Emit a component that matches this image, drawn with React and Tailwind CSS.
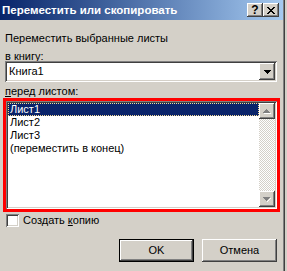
const raised =
  "shadow-[inset_-1px_-1px_0_#404040,inset_1px_1px_0_#ffffff,inset_-2px_-2px_0_#808080,inset_2px_2px_0_#d4d0c8]";
const sunken =
  "shadow-[inset_1px_1px_0_#808080,inset_-1px_-1px_0_#ffffff,inset_2px_2px_0_#404040,inset_-2px_-2px_0_#d4d0c8]";

function ArrowDown({ color = "#000000" }) {
  return (
    <svg width="7" height="4" viewBox="0 0 7 4" className="block" shapeRendering="crispEdges">
      <path d="M0 0h7v1H0zM1 1h5v1H1zM2 2h3v1H2zM3 3h1v1H3z" fill={color} />
    </svg>
  );
}

function ArrowUp({ color = "#808080" }) {
  return (
    <svg width="8" height="5" viewBox="0 0 8 5" className="block" shapeRendering="crispEdges">
      <path d="M4 1h1v1H4zM5 2h1v1H5zM6 3h1v1H6zM1 4h7v1H1z" fill="#ffffff" />
      <path d="M3 0h1v1H3zM2 1h3v1H2zM1 2h5v1H1zM0 3h7v1H0z" fill={color} />
    </svg>
  );
}

function ArrowDownDisabled() {
  return (
    <svg width="8" height="5" viewBox="0 0 8 5" className="block" shapeRendering="crispEdges">
      <path d="M7 1h1v1H7zM6 2h1v1H6zM5 3h1v1H5zM4 4h1v1H4z" fill="#ffffff" />
      <path d="M0 0h7v1H0zM1 1h5v1H1zM2 2h3v1H2zM3 3h1v1H3z" fill="#808080" />
    </svg>
  );
}

function CloseGlyph() {
  return (
    <svg width="8" height="7" viewBox="0 0 8 7" className="block" shapeRendering="crispEdges">
      <path
        d="M0 0h2v1H0zM6 0h2v1H6zM1 1h2v1H1zM5 1h2v1H5zM2 2h4v1H2zM3 3h2v1H3zM2 4h4v1H2zM1 5h2v1H1zM5 5h2v1H5zM0 6h2v1H0zM6 6h2v1H6z"
        fill="#000000"
      />
    </svg>
  );
}

export default function App() {
  return (
    <div className="w-[287px] h-[271px] flex bg-[#d4d0c8] overflow-hidden font-['Liberation_Sans',Arial,sans-serif] text-[11px] leading-[13px] text-black">
      <div className="w-[283px] flex flex-col">
        {/* Title bar */}
        <div className="h-[20px] flex items-center bg-linear-to-r from-[#0a246a] to-[#a6caf0] pl-[2px] pr-[4px]">
          <div className="flex-1 text-white font-bold text-[11.5px] leading-[14px] whitespace-nowrap">
            Переместить или скопировать
          </div>
          <div className={`w-[16px] h-[14px] bg-[#d4d0c8] ${raised} flex items-center justify-center font-bold text-[12px] leading-[12px]`}>
            ?
          </div>
          <div className={`w-[16px] h-[14px] bg-[#d4d0c8] ${raised} flex items-center justify-center`}>
            <CloseGlyph />
          </div>
        </div>

        {/* Body */}
        <div className="pl-[5px] mt-[12px] h-[13px] whitespace-nowrap">Переместить выбранные листы</div>
        <div className="pl-[5px] mt-[5px] h-[11px] whitespace-nowrap">
          <span className="underline">в</span> книгу:
        </div>

        <div className={`ml-[5px] w-[272px] h-[21px] bg-white ${sunken} flex items-center p-[2px]`}>
          <div className="flex-1 pl-[2px] whitespace-nowrap">Книга1</div>
          <div className={`w-[16px] h-[17px] bg-[#d4d0c8] ${raised} flex items-center justify-center`}>
            <ArrowDown />
          </div>
        </div>

        <div className="pl-[5px] mt-[3px] h-[13px] whitespace-nowrap">
          <span className="underline">п</span>еред листом:
        </div>

        {/* Red annotated list box */}
        <div className="ml-[3px] w-[277px] h-[114px] border-[3px] border-[#ff0000]">
          <div className={`w-full h-full bg-white ${sunken} p-[2px] flex`}>
            <div className="flex-1 flex flex-col">
              <div className="h-[13px] bg-[#0a246a] text-white border border-dotted border-[#f5db95] pl-[1px] leading-[11px] whitespace-nowrap">
                Лист1
              </div>
              <div className="h-[13px] pl-[2px] whitespace-nowrap">Лист2</div>
              <div className="h-[13px] pl-[2px] whitespace-nowrap">Лист3</div>
              <div className="h-[13px] pl-[2px] whitespace-nowrap">(переместить в конец)</div>
            </div>
            <div className="w-[16px] flex flex-col">
              <div className={`h-[16px] bg-[#d4d0c8] ${raised} flex items-center justify-center`}>
                <ArrowUp />
              </div>
              <div className="flex-1 bg-[conic-gradient(#ffffff_25%,#d4d0c8_0_50%,#ffffff_0_75%,#d4d0c8_0)] bg-[length:2px_2px]" />
              <div className={`h-[16px] bg-[#d4d0c8] ${raised} flex items-center justify-center`}>
                <ArrowDownDisabled />
              </div>
            </div>
          </div>
        </div>

        {/* Checkbox */}
        <div className="mt-[2px] ml-[6px] h-[13px] flex items-center">
          <div className={`w-[13px] h-[13px] bg-white ${sunken}`} />
          <div className="ml-[4px] whitespace-nowrap">
            Создать <span className="underline">к</span>опию
          </div>
        </div>

        {/* Buttons */}
        <div className="mt-[12px] flex justify-end pr-[6px] gap-[8px]">
          <div className="w-[75px] h-[23px] border border-black">
            <div className={`w-full h-full ${raised} flex items-center justify-center`}>OK</div>
          </div>
          <div className={`w-[75px] h-[23px] ${raised} flex items-center justify-center`}>Отмена</div>
        </div>
      </div>
      <div className="w-px bg-[#808080]" />
      <div className="w-px bg-[#404040]" />
      <div className="w-[2px] bg-[#d4d0c8]" />
    </div>
  );
}
